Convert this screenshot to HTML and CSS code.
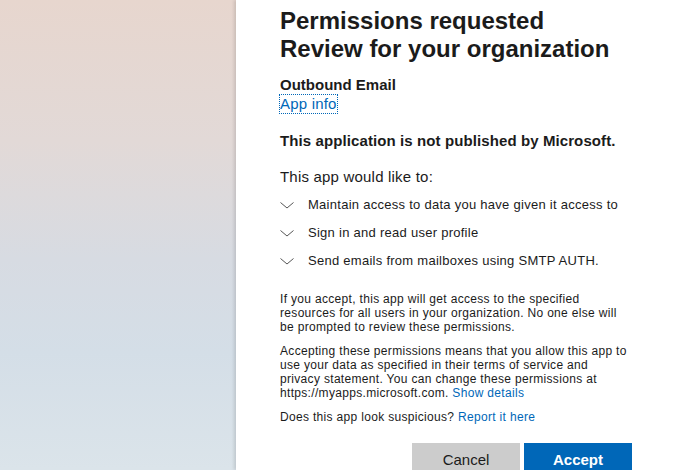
FILE: index.html
```html
<!DOCTYPE html>
<html>
<head>
<meta charset="utf-8">
<link rel="stylesheet" href="styles.css">
</head>
<body>
<div class="page">
  <div class="backdrop"></div>
  <div class="panel">
    <h1 class="title">Permissions requested<br>Review for your organization</h1>
    <div class="app-name">Outbound Email</div>
    <a class="app-info" href="#">App info</a>
    <div class="publisher">This application is not published by Microsoft.</div>
    <div class="lead">This app would like to:</div>
    <ul class="scopes">
      <li class="scope"><svg class="chev" width="14" height="10" viewBox="0 0 14 10"><path d="M0.5 2.5 L7 8 L13.5 2.5" fill="none" stroke="#555" stroke-width="1"/></svg><span>Maintain access to data you have given it access to</span></li>
      <li class="scope"><svg class="chev" width="14" height="10" viewBox="0 0 14 10"><path d="M0.5 2.5 L7 8 L13.5 2.5" fill="none" stroke="#555" stroke-width="1"/></svg><span>Sign in and read user profile</span></li>
      <li class="scope"><svg class="chev" width="14" height="10" viewBox="0 0 14 10"><path d="M0.5 2.5 L7 8 L13.5 2.5" fill="none" stroke="#555" stroke-width="1"/></svg><span>Send emails from mailboxes using SMTP AUTH.</span></li>
    </ul>
    <p class="note">If you accept, this app will get access to the specified resources for all users in your organization. No one else will be prompted to review these permissions.</p>
    <p class="note">Accepting these permissions means that you allow this app to use your data as specified in their terms of service and privacy statement. You can change these permissions at https://myapps.microsoft.com. <a class="link" href="#">Show details</a></p>
    <p class="note">Does this app look suspicious? <a class="link" href="#">Report it here</a></p>
    <div class="actions">
      <button class="btn cancel">Cancel</button>
      <button class="btn accept">Accept</button>
    </div>
  </div>
</div>
</body>
</html>
```

FILE: styles.css
```css
html, body {
  margin: 0;
  padding: 0;
  height: 100%;
  overflow: hidden;
}
body {
  font-family: "Liberation Sans", Arial, sans-serif;
  color: #1b1b1b;
}
.page {
  display: flex;
  height: 470px;
  width: 674px;
}
.backdrop {
  width: 236px;
  flex: none;
  background: linear-gradient(180deg, #e7d6ce 0%, #e2d9d7 30%, #d7dbe2 55%, #d4dee7 75%, #dbe4ea 100%);
}
.panel {
  flex: 1;
  background: #fff;
  box-shadow: -2px 0 3px rgba(0,0,0,0.12);
  padding: 7px 42px 0 44px;
  position: relative;
}
.title {
  font-size: 24px;
  line-height: 28px;
  font-weight: bold;
  margin: 0 0 12px 0;
}
.app-name {
  font-size: 15px;
  font-weight: bold;
  line-height: 20px;
}
.app-info {
  display: inline-block;
  font-size: 15px;
  line-height: 18px;
  letter-spacing: 0.2px;
  color: #0067b8;
  text-decoration: none;
  outline: 1px dotted #0067b8;
  outline-offset: 0;
}
.publisher {
  font-size: 15px;
  font-weight: bold;
  line-height: 20px;
  letter-spacing: 0.1px;
  margin-top: 18px;
}
.lead {
  font-size: 15px;
  line-height: 20px;
  letter-spacing: 0.2px;
  margin-top: 16px;
}
.scopes {
  list-style: none;
  margin: 3px 0 0 0;
  padding: 0;
}
.scope {
  display: flex;
  align-items: center;
  font-size: 13px;
  letter-spacing: 0.27px;
  height: 28px;
}
.chev {
  flex: none;
  margin-right: 14px;
  position: relative;
  top: 1px;
}
.note {
  font-size: 12px;
  line-height: 14px;
  letter-spacing: 0.32px;
  margin: 18px 0 0 0;
  padding-right: 5px;
}
.note + .note {
  margin-top: 10px;
}
.link {
  color: #0067b8;
  text-decoration: none;
}
.actions {
  display: flex;
  justify-content: flex-end;
  gap: 4px;
  margin-top: 19px;
}
.btn {
  width: 108px;
  height: 32px;
  border: none;
  font-family: "Liberation Sans", Arial, sans-serif;
  font-size: 15px;
  padding: 0;
}
.cancel {
  background: #cccccc;
  color: #1b1b1b;
}
.accept {
  background: #0067b8;
  color: #fff;
  font-weight: bold;
}
```
